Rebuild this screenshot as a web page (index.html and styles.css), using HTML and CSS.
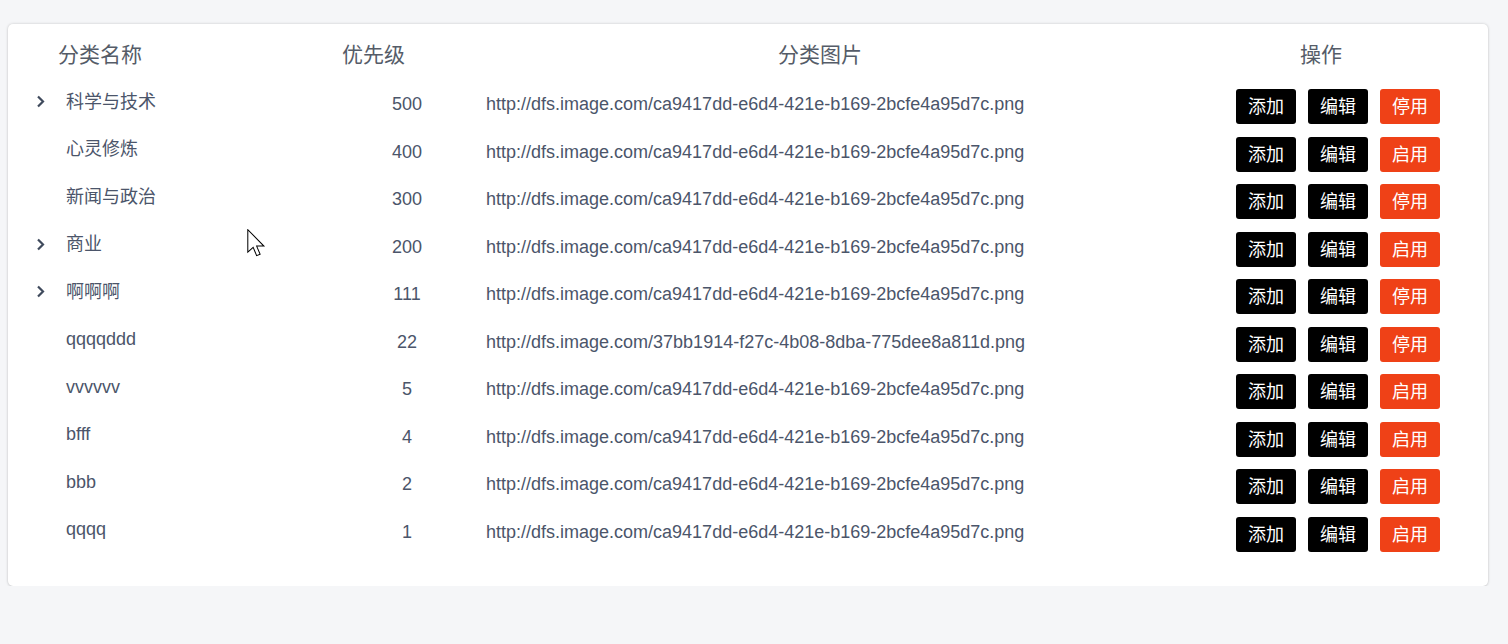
FILE: index.html
```html
<!DOCTYPE html>
<html lang="zh-CN">
<head>
<meta charset="utf-8">
<title>分类管理</title>
<link rel="stylesheet" href="styles.css">
</head>
<body>
<div class="card">
  <div class="row head">
    <div class="c-name"><span class="h-name">分类名称</span></div>
    <div class="c-pri"><span class="h-pri">优先级</span></div>
    <div class="c-img h-img">分类图片</div>
    <div class="c-op"><span class="h-op">操作</span></div>
  </div>

  <div class="row">
    <div class="c-name"><span class="arrow"><svg width="10" height="13" viewBox="0 0 10 13"><path d="M2 1.5 L7 6.5 L2 11.5" fill="none" stroke="#3f4a5c" stroke-width="2.2"/></svg></span><span class="name">科学与技术</span></div>
    <div class="c-pri">500</div>
    <div class="c-img">http://dfs.image.com/ca9417dd-e6d4-421e-b169-2bcfe4a95d7c.png</div>
    <div class="c-op"><span class="btn">添加</span><span class="btn">编辑</span><span class="btn warn">停用</span></div>
  </div>
  <div class="row">
    <div class="c-name"><span class="arrow"></span><span class="name">心灵修炼</span></div>
    <div class="c-pri">400</div>
    <div class="c-img">http://dfs.image.com/ca9417dd-e6d4-421e-b169-2bcfe4a95d7c.png</div>
    <div class="c-op"><span class="btn">添加</span><span class="btn">编辑</span><span class="btn warn">启用</span></div>
  </div>
  <div class="row">
    <div class="c-name"><span class="arrow"></span><span class="name">新闻与政治</span></div>
    <div class="c-pri">300</div>
    <div class="c-img">http://dfs.image.com/ca9417dd-e6d4-421e-b169-2bcfe4a95d7c.png</div>
    <div class="c-op"><span class="btn">添加</span><span class="btn">编辑</span><span class="btn warn">停用</span></div>
  </div>
  <div class="row">
    <div class="c-name"><span class="arrow"><svg width="10" height="13" viewBox="0 0 10 13"><path d="M2 1.5 L7 6.5 L2 11.5" fill="none" stroke="#3f4a5c" stroke-width="2.2"/></svg></span><span class="name">商业</span></div>
    <div class="c-pri">200</div>
    <div class="c-img">http://dfs.image.com/ca9417dd-e6d4-421e-b169-2bcfe4a95d7c.png</div>
    <div class="c-op"><span class="btn">添加</span><span class="btn">编辑</span><span class="btn warn">启用</span></div>
  </div>
  <div class="row">
    <div class="c-name"><span class="arrow"><svg width="10" height="13" viewBox="0 0 10 13"><path d="M2 1.5 L7 6.5 L2 11.5" fill="none" stroke="#3f4a5c" stroke-width="2.2"/></svg></span><span class="name">啊啊啊</span></div>
    <div class="c-pri">111</div>
    <div class="c-img">http://dfs.image.com/ca9417dd-e6d4-421e-b169-2bcfe4a95d7c.png</div>
    <div class="c-op"><span class="btn">添加</span><span class="btn">编辑</span><span class="btn warn">停用</span></div>
  </div>
  <div class="row">
    <div class="c-name"><span class="arrow"></span><span class="name">qqqqddd</span></div>
    <div class="c-pri">22</div>
    <div class="c-img">http://dfs.image.com/37bb1914-f27c-4b08-8dba-775dee8a811d.png</div>
    <div class="c-op"><span class="btn">添加</span><span class="btn">编辑</span><span class="btn warn">停用</span></div>
  </div>
  <div class="row">
    <div class="c-name"><span class="arrow"></span><span class="name">vvvvvv</span></div>
    <div class="c-pri">5</div>
    <div class="c-img">http://dfs.image.com/ca9417dd-e6d4-421e-b169-2bcfe4a95d7c.png</div>
    <div class="c-op"><span class="btn">添加</span><span class="btn">编辑</span><span class="btn warn">启用</span></div>
  </div>
  <div class="row">
    <div class="c-name"><span class="arrow"></span><span class="name">bfff</span></div>
    <div class="c-pri">4</div>
    <div class="c-img">http://dfs.image.com/ca9417dd-e6d4-421e-b169-2bcfe4a95d7c.png</div>
    <div class="c-op"><span class="btn">添加</span><span class="btn">编辑</span><span class="btn warn">启用</span></div>
  </div>
  <div class="row">
    <div class="c-name"><span class="arrow"></span><span class="name">bbb</span></div>
    <div class="c-pri">2</div>
    <div class="c-img">http://dfs.image.com/ca9417dd-e6d4-421e-b169-2bcfe4a95d7c.png</div>
    <div class="c-op"><span class="btn">添加</span><span class="btn">编辑</span><span class="btn warn">启用</span></div>
  </div>
  <div class="row">
    <div class="c-name"><span class="arrow"></span><span class="name">qqqq</span></div>
    <div class="c-pri">1</div>
    <div class="c-img">http://dfs.image.com/ca9417dd-e6d4-421e-b169-2bcfe4a95d7c.png</div>
    <div class="c-op"><span class="btn">添加</span><span class="btn">编辑</span><span class="btn warn">启用</span></div>
  </div>

  <svg class="cursor" width="19" height="29" viewBox="0 0 13 20"><path d="M0.5 0.5 L0.5 16 L4.2 12.6 L6.6 18.4 L9 17.4 L6.6 11.8 L11.6 11.8 Z" fill="#fff" stroke="#000" stroke-width="0.7" stroke-linejoin="miter"/></svg>
</div>
</body>
</html>
```

FILE: styles.css
```css
html, body {
  margin: 0;
  padding: 0;
  background: #f5f6f8;
}
body {
  padding: 24px 20px 0 8px;
  font-family: "Liberation Sans", "Noto Sans CJK SC", sans-serif;
  font-size: 18px;
  color: #4b556a;
}
.card {
  position: relative;
  width: 1480px;
  height: 562px;
  box-sizing: border-box;
  background: #fff;
  border-radius: 5px;
  box-shadow: 0 0 3px rgba(0, 0, 0, 0.18), 0 1px 2px rgba(0, 0, 0, 0.08);
  padding: 0 0 28px 0;
}
.row {
  display: grid;
  grid-template-columns: 332px 134px 692px 322px;
  height: 47.5px;
  align-items: center;
}
.row.head {
  height: 59px;
  align-items: start;
  font-size: 21px;
  line-height: 24px;
  color: #555c68;
}
.head > div {
  padding-top: 19px;
}
.h-name { padding-left: 50px; }
.h-pri { padding-left: 2px; }
.h-img { text-align: center; }
.h-op { padding-left: 134px; }
.c-name {
  display: flex;
  align-items: center;
  padding-left: 28px;
  padding-bottom: 10px;
  line-height: 22px;
}
.head .c-name { padding-left: 0; padding-bottom: 0; line-height: 24px; }
.arrow {
  display: flex;
  width: 30px;
  height: 13px;
  align-items: center;
}
.arrow svg { display: block; }
.c-pri {
  text-align: center;
  line-height: 22px;
  padding-bottom: 5px;
}
.head .c-pri { text-align: left; padding-bottom: 0; line-height: 24px; }
.c-img {
  padding-left: 12px;
  line-height: 22px;
  padding-bottom: 5px;
}
.head .c-img { padding-left: 0; padding-bottom: 0; line-height: 24px; }
.c-op {
  display: flex;
  gap: 12px;
  padding-left: 70px;
}
.head .c-op { padding-left: 0; display: block; }
.btn {
  display: flex;
  align-items: center;
  justify-content: center;
  width: 60px;
  height: 35px;
  box-sizing: border-box;
  padding-bottom: 3px;
  border-radius: 3px;
  background: #000;
  color: #fff;
  font-size: 18px;
  font-family: "Noto Sans CJK SC", sans-serif;
}
.btn.warn {
  background: #ef4117;
}
.cursor {
  position: absolute;
  left: 239px;
  top: 205px;
}
```
